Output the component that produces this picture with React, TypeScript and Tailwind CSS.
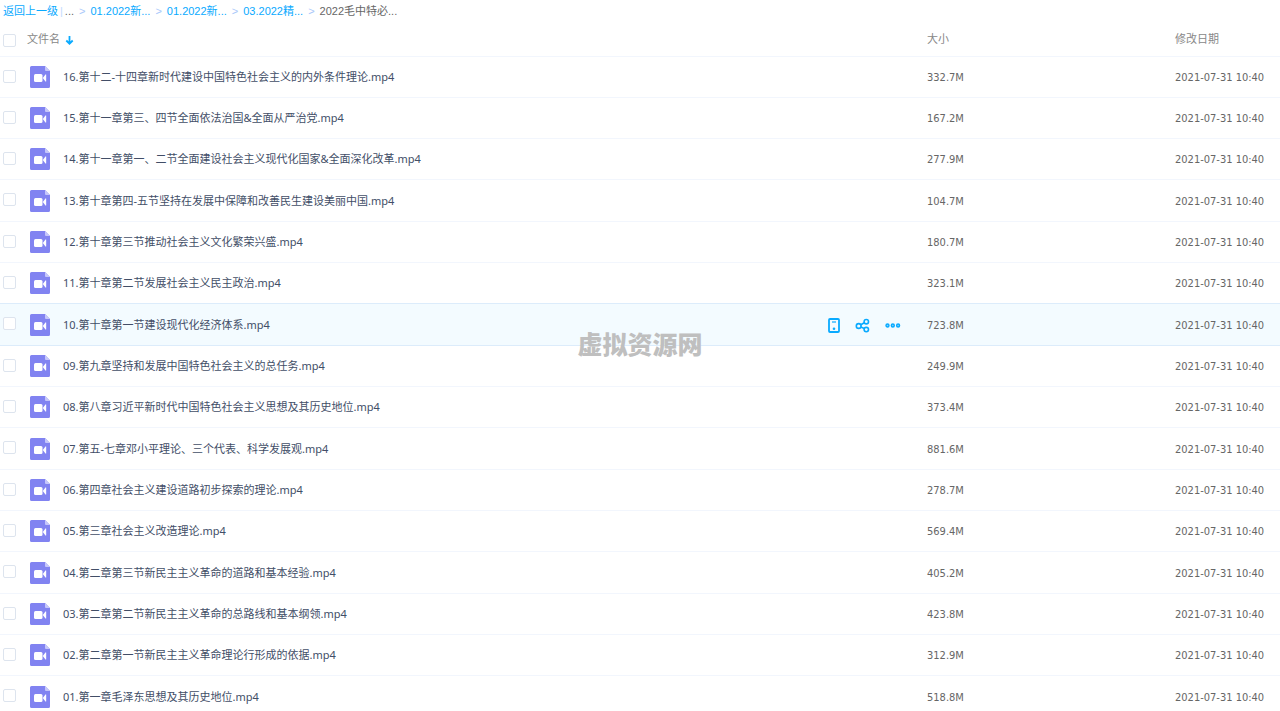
import { useState } from 'react';

interface FileEntry {
  name: string;
  size: string;
  date: string;
}

const DATE = '2021-07-31 10:40';

const files: FileEntry[] = [
  { name: '16.第十二-十四章新时代建设中国特色社会主义的内外条件理论.mp4', size: '332.7M', date: DATE },
  { name: '15.第十一章第三、四节全面依法治国&全面从严治党.mp4', size: '167.2M', date: DATE },
  { name: '14.第十一章第一、二节全面建设社会主义现代化国家&全面深化改革.mp4', size: '277.9M', date: DATE },
  { name: '13.第十章第四-五节坚持在发展中保障和改善民生建设美丽中国.mp4', size: '104.7M', date: DATE },
  { name: '12.第十章第三节推动社会主义文化繁荣兴盛.mp4', size: '180.7M', date: DATE },
  { name: '11.第十章第二节发展社会主义民主政治.mp4', size: '323.1M', date: DATE },
  { name: '10.第十章第一节建设现代化经济体系.mp4', size: '723.8M', date: DATE },
  { name: '09.第九章坚持和发展中国特色社会主义的总任务.mp4', size: '249.9M', date: DATE },
  { name: '08.第八章习近平新时代中国特色社会主义思想及其历史地位.mp4', size: '373.4M', date: DATE },
  { name: '07.第五-七章邓小平理论、三个代表、科学发展观.mp4', size: '881.6M', date: DATE },
  { name: '06.第四章社会主义建设道路初步探索的理论.mp4', size: '278.7M', date: DATE },
  { name: '05.第三章社会主义改造理论.mp4', size: '569.4M', date: DATE },
  { name: '04.第二章第三节新民主主义革命的道路和基本经验.mp4', size: '405.2M', date: DATE },
  { name: '03.第二章第二节新民主主义革命的总路线和基本纲领.mp4', size: '423.8M', date: DATE },
  { name: '02.第二章第一节新民主主义革命理论行形成的依据.mp4', size: '312.9M', date: DATE },
  { name: '01.第一章毛泽东思想及其历史地位.mp4', size: '518.8M', date: DATE },
];

const crumbs = ['01.2022新...', '01.2022新...', '03.2022精...'];

export default function App() {
  const [selected, setSelected] = useState<string[]>([]);
  const [active, setActive] = useState(6);

  const toggle = (name: string) => {
    setSelected((prev) => (prev.includes(name) ? prev.filter((n) => n !== name) : [...prev, name]));
  };

  const toggleAll = () => {
    setSelected(selected.length === files.length ? [] : files.map((f) => f.name));
  };

  return (
    <main className="relative h-screen overflow-hidden bg-white text-[11px] leading-4 text-[#424e67] font-['DejaVu_Sans_Condensed','Noto_Sans_CJK_SC',sans-serif]">
      <nav
        aria-label="路径"
        className="flex h-[22px] items-center whitespace-nowrap pl-[3px] text-[#09aaff] font-['Liberation_Sans','Noto_Sans_CJK_SC',sans-serif]"
      >
        <a href="#up">返回上一级</a>
        <span className="px-[2px] text-[#c4dbfe]">|</span>
        <span className="text-[#666]">...</span>
        {crumbs.map((crumb, i) => (
          <span key={i} className="flex">
            <Separator />
            <a href={`#path-${i}`}>{crumb}</a>
          </span>
        ))}
        <Separator />
        <span className="text-[#666]">2022毛中特必...</span>
      </nav>

      <table className="w-full table-fixed border-separate border-spacing-0 text-left">
        <colgroup>
          <col />
          <col className="w-[248px]" />
          <col className="w-[105px]" />
        </colgroup>
        <thead>
          <tr className="h-[35px] text-[#888]">
            <th className="border-b border-[#f2f6fd] p-0 pt-0.5 font-normal">
              <div className="flex items-center pl-[3px]">
                <Checkbox label="全选" checked={selected.length === files.length} onChange={toggleAll} />
                <button className="ml-[11px] flex items-center gap-[5px]">
                  文件名
                  <SortArrow />
                </button>
              </div>
            </th>
            <th className="border-b border-[#f2f6fd] p-0 pt-0.5 font-normal">大小</th>
            <th className="border-b border-[#f2f6fd] p-0 pt-0.5 font-normal">修改日期</th>
          </tr>
        </thead>
        <tbody>
          {files.map((file, i) => (
            <FileRow
              key={file.name}
              file={file}
              active={i === active}
              beforeActive={i === active - 1}
              checked={selected.includes(file.name)}
              onToggle={() => toggle(file.name)}
              onHover={() => setActive(i)}
            />
          ))}
        </tbody>
      </table>

      <div className="pointer-events-none absolute left-1/2 top-[334px] -translate-x-1/2 whitespace-nowrap text-[25px] font-black leading-6 text-[#bfbfbf]">
        虚拟资源网
      </div>
    </main>
  );
}

function FileRow({
  file,
  active,
  beforeActive,
  checked,
  onToggle,
  onHover,
}: {
  file: FileEntry;
  active: boolean;
  beforeActive: boolean;
  checked: boolean;
  onToggle: () => void;
  onHover: () => void;
}) {
  const cell = `border-b ${active || beforeActive ? 'border-[#dcecfb]' : 'border-[#f2f6fd]'}`;

  return (
    <tr
      onMouseEnter={onHover}
      className={`h-[41px] [&:nth-child(3n+4)]:h-[42px] ${active ? 'bg-[#f3fbff]' : ''}`}
    >
      <td className={`${cell} p-0`}>
        <div className="flex items-center pl-[3px]">
          <span className="flex pb-0.5">
            <Checkbox label={file.name} checked={checked} onChange={onToggle} />
          </span>
          <VideoFileIcon />
          <span className="ml-[13px] min-w-0 flex-1 truncate font-['Noto_Sans','Noto_Sans_CJK_SC',sans-serif]">
            {file.name}
          </span>
          {active && (
            <div className="mr-[26px] flex items-center gap-[15px] pt-0.5 text-[#09aaff]">
              <button aria-label="下载到手机">
                <PhoneIcon />
              </button>
              <button aria-label="分享">
                <ShareIcon />
              </button>
              <button aria-label="更多">
                <MoreIcon />
              </button>
            </div>
          )}
        </div>
      </td>
      <td className={`${cell} p-0 pt-0.5 text-[#666]`}>{file.size}</td>
      <td className={`${cell} whitespace-nowrap p-0 pt-0.5 text-[#666]`}>{file.date}</td>
    </tr>
  );
}

function Checkbox({ label, checked, onChange }: { label: string; checked: boolean; onChange: () => void }) {
  return (
    <input
      type="checkbox"
      aria-label={label}
      checked={checked}
      onChange={onChange}
      className="size-[13px] shrink-0 appearance-none rounded-[2px] border border-[#dde4ee] bg-white checked:border-[#09aaff] checked:bg-[#09aaff]"
    />
  );
}

function Separator() {
  return <span className="px-[5px] text-[#a9c8fa]">&gt;</span>;
}

function SortArrow() {
  return (
    <svg width="9" height="9" viewBox="0 0 9 9" fill="none" stroke="#09aaff" strokeWidth="1.8" aria-hidden="true">
      <path d="M4.5 0v8M1.300 4.500l3.200 3.200 3.200-3.200" />
    </svg>
  );
}

function VideoFileIcon() {
  return (
    <svg width="20" height="22" viewBox="0 0 20 22" className="ml-[14px] shrink-0" aria-hidden="true">
      <path d="M1.500 0H15l5 5v15.500a1.500 1.500 0 0 1-1.500 1.500h-17A1.500 1.500 0 0 1 0 20.500v-19A1.500 1.500 0 0 1 1.500 0z" fill="#8183f1" />
      <path d="M15 0l5 5h-4a1 1 0 0 1-1-1z" fill="#c6c7fa" />
      <rect x="4" y="8" width="8.500" height="8" rx="1.500" fill="#fff" />
      <path d="M12.800 12l2.700-3.500q.7-.4.700.4v6.200q0 .8-.7.400z" fill="#fff" />
    </svg>
  );
}

function PhoneIcon() {
  return (
    <svg width="12" height="15" viewBox="0 0 12 15" fill="none" stroke="currentColor" strokeWidth="1.800" aria-hidden="true">
      <rect x="1" y="1" width="10" height="13" rx="1" />
      <path d="M4 4h4" strokeWidth="1.200" />
      <circle cx="6" cy="10.700" r="1.300" fill="currentColor" stroke="none" />
    </svg>
  );
}

function ShareIcon() {
  return (
    <svg width="15" height="15" viewBox="0 0 15 15" fill="none" stroke="currentColor" strokeWidth="1.600" aria-hidden="true">
      <circle cx="3.700" cy="8" r="2.400" />
      <circle cx="11.300" cy="3.700" r="2.200" />
      <circle cx="11.300" cy="11.600" r="2.200" />
      <path d="M5.800 6.800l3.500-2M5.800 9l3.500 1.500" />
    </svg>
  );
}

function MoreIcon() {
  return (
    <svg width="16" height="15" viewBox="0 0 16 15" fill="currentColor" fillOpacity="0.5" stroke="currentColor" strokeWidth="1.400" aria-hidden="true">
      <circle cx="2.500" cy="7.500" r="1.500" />
      <circle cx="7.800" cy="7.500" r="1.500" />
      <circle cx="13.100" cy="7.500" r="1.500" />
    </svg>
  );
}
